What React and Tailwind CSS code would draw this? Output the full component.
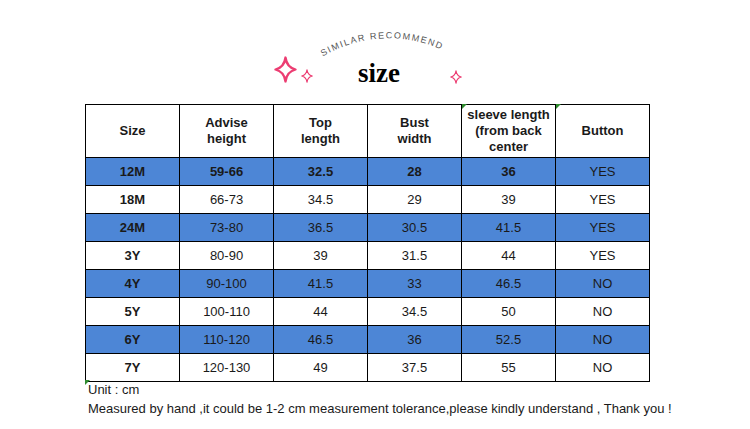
const rows = [
  { size: "12M", h: "59-66", top: "32.5", bust: "28", sleeve: "36", btn: "YES", blue: true, bold: true },
  { size: "18M", h: "66-73", top: "34.5", bust: "29", sleeve: "39", btn: "YES" },
  { size: "24M", h: "73-80", top: "36.5", bust: "30.5", sleeve: "41.5", btn: "YES", blue: true },
  { size: "3Y", h: "80-90", top: "39", bust: "31.5", sleeve: "44", btn: "YES" },
  { size: "4Y", h: "90-100", top: "41.5", bust: "33", sleeve: "46.5", btn: "NO", blue: true },
  { size: "5Y", h: "100-110", top: "44", bust: "34.5", sleeve: "50", btn: "NO" },
  { size: "6Y", h: "110-120", top: "46.5", bust: "36", sleeve: "52.5", btn: "NO", blue: true },
  { size: "7Y", h: "120-130", top: "49", bust: "37.5", sleeve: "55", btn: "NO" },
];

function Sparkle({ w, h, className }) {
  return (
    <svg width={w} height={h} viewBox="0 0 24 28" className={className}>
      <path
        d="M12 1.5 C13 9 16 12.5 22.5 14 C16 15.5 13 19 12 26.5 C11 19 8 15.5 1.5 14 C8 12.5 11 9 12 1.5 Z"
        fill="none"
        stroke="#ec3d72"
        strokeWidth="2.4"
        strokeLinejoin="round"
      />
    </svg>
  );
}

function Marker({ className }) {
  return <span className={`absolute h-0 w-0 border-t-[5px] border-r-[5px] border-t-[#2e8b2e] border-r-transparent ${className}`} />;
}

export default function App() {
  const cell = "border border-black text-center align-middle p-0";
  return (
    <div className="h-[429px] w-[750px] bg-white text-[13px] text-[#1a1a1a]" style={{ fontFamily: '"Liberation Sans", Arial, sans-serif' }}>
      <div className="relative h-[104px]">
        <svg width="170" height="27" viewBox="0 0 170 27" className="absolute left-[302px] top-[31px]">
          <defs>
            <path id="arc" d="M 20 26 A 128 128 0 0 1 150 24" />
          </defs>
          <text fontSize="9" letterSpacing="1.5" fill="#555" fontFamily="Liberation Sans, Arial, sans-serif">
            <textPath href="#arc" startOffset="1">SIMILAR   RECOMMEND</textPath>
          </text>
        </svg>
        <Sparkle w={23} h={27} className="absolute left-[274px] top-[56px]" />
        <Sparkle w={12} h={14} className="absolute left-[301px] top-[69px]" />
        <Sparkle w={12} h={14} className="absolute left-[450px] top-[70px]" />
        <div className="absolute left-[358px] top-[62px] text-[27px] font-bold leading-[22px] text-black" style={{ fontFamily: '"Liberation Serif", "Times New Roman", serif' }}>
          size
        </div>
      </div>
      <div className="relative ml-[85px] w-[564px]">
        <table className="w-[564px] table-fixed border-collapse">
          <colgroup>
            <col className="w-[94px]" />
            <col className="w-[94px]" />
            <col className="w-[94px]" />
            <col className="w-[94px]" />
            <col className="w-[94px]" />
            <col className="w-[94px]" />
          </colgroup>
          <thead>
            <tr className="h-[53px] font-bold leading-[16px]">
              <th className={cell}>Size</th>
              <th className={cell}>Advise<br />height</th>
              <th className={cell}>Top<br />length</th>
              <th className={cell}>Bust<br />width</th>
              <th className={cell}>sleeve length<br />(from back<br />center</th>
              <th className={cell}>Button</th>
            </tr>
          </thead>
          <tbody>
            {rows.map((r) => (
              <tr key={r.size} className={`h-[28px] ${r.blue ? "bg-[#4d86d6]" : "bg-white"} ${r.bold ? "font-bold" : ""}`}>
                <td className={`${cell} font-bold`}>{r.size}</td>
                <td className={cell}>{r.h}</td>
                <td className={cell}>{r.top}</td>
                <td className={cell}>{r.bust}</td>
                <td className={cell}>{r.sleeve}</td>
                <td className={`${cell} font-normal`}>{r.btn}</td>
              </tr>
            ))}
          </tbody>
        </table>
        <Marker className="left-[377px] top-0" />
        <Marker className="left-[471px] top-0" />
        <Marker className="left-0 top-[276px]" />
      </div>
      <div className="ml-[88px] leading-[16px]">Unit : cm</div>
      <div className="ml-[88px] mt-[3px] leading-[16px]">
        Measured by hand ,it could be 1-2 cm measurement tolerance,please kindly understand , Thank you !
      </div>
    </div>
  );
}
